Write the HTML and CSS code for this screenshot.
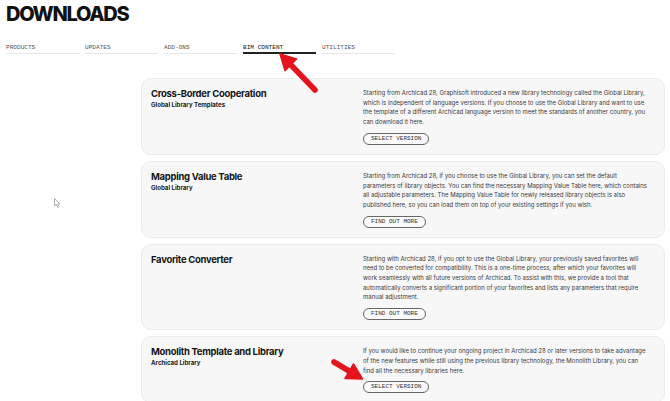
FILE: index.html
```html
<!DOCTYPE html>
<html lang="en">
<head>
<meta charset="utf-8">
<title>Downloads</title>
<link rel="stylesheet" href="styles.css">
</head>
<body>
<div class="page">
  <h1 class="title">DOWNLOADS</h1>
  <nav class="tabs">
    <a class="tab">PRODUCTS</a>
    <a class="tab">UPDATES</a>
    <a class="tab">ADD-ONS</a>
    <a class="tab active">BIM CONTENT</a>
    <a class="tab">UTILITIES</a>
  </nav>
  <main class="cards">
    <section class="card">
      <div class="card-head">
        <h2 class="card-title">Cross-Border Cooperation</h2>
        <p class="card-sub">Global Library Templates</p>
      </div>
      <div class="card-body">
        <p class="card-desc">Starting from Archicad 28, Graphisoft introduced a new library technology called the Global Library,<br>which is independent of language versions. If you choose to use the Global Library and want to use<br>the template of a different Archicad language version to meet the standards of another country, you<br>can download it here.</p>
        <a class="btn">SELECT VERSION</a>
      </div>
    </section>
    <section class="card">
      <div class="card-head">
        <h2 class="card-title">Mapping Value Table</h2>
        <p class="card-sub">Global Library</p>
      </div>
      <div class="card-body">
        <p class="card-desc">Starting from Archicad 28, if you choose to use the Global Library, you can set the default<br>parameters of library objects. You can find the necessary Mapping Value Table here, which contains<br>all adjustable parameters. The Mapping Value Table for newly released library objects is also<br>published here, so you can load them on top of your existing settings if you wish.</p>
        <a class="btn">FIND OUT MORE</a>
      </div>
    </section>
    <section class="card">
      <div class="card-head">
        <h2 class="card-title">Favorite Converter</h2>
      </div>
      <div class="card-body">
        <p class="card-desc">Starting with Archicad 28, if you opt to use the Global Library, your previously saved favorites will<br>need to be converted for compatibility. This is a one-time process, after which your favorites will<br>work seamlessly with all future versions of Archicad. To assist with this, we provide a tool that<br>automatically converts a significant portion of your favorites and lists any parameters that require<br>manual adjustment.</p>
        <a class="btn">FIND OUT MORE</a>
      </div>
    </section>
    <section class="card">
      <div class="card-head">
        <h2 class="card-title">Monolith Template and Library</h2>
        <p class="card-sub">Archicad Library</p>
      </div>
      <div class="card-body">
        <p class="card-desc">If you would like to continue your ongoing project in Archicad 28 or later versions to take advantage<br>of the new features while still using the previous library technology, the Monolith Library, you can<br>find all the necessary libraries here.</p>
        <a class="btn">SELECT VERSION</a>
      </div>
    </section>
  </main>
</div>
<svg class="overlay" width="670" height="401" viewBox="0 0 670 401" aria-hidden="true">
  <line x1="315" y1="90" x2="291" y2="65" stroke="#e3141b" stroke-width="5.6" stroke-linecap="round"/>
  <polygon points="280,54 296.5,59 285,70.6" fill="#e3141b" stroke="#e3141b" stroke-width="1.5" stroke-linejoin="round"/>
  <line x1="334" y1="362" x2="349" y2="371" stroke="#e3141b" stroke-width="5.6" stroke-linecap="round"/>
  <polygon points="362.5,379 345,378.5 353.5,364" fill="#e3141b" stroke="#e3141b" stroke-width="1.5" stroke-linejoin="round"/>
  <path d="M54.5 198.5 L54.5 206 L56.3 204.4 L57.6 207.3 L58.8 206.8 L57.6 204 L60 204 Z" fill="#fff" stroke="#9a9a9a" stroke-width="0.8" stroke-linejoin="round"/>
</svg>
</body>
</html>
```

FILE: styles.css
```css
html, body {
  margin: 0;
  padding: 0;
  background: #ffffff;
}

body {
  font-family: Inter, "Noto Sans", "Liberation Sans", sans-serif;
  color: #1a1a1a;
  width: 670px;
  height: 401px;
  overflow: hidden;
  position: relative;
}

.page {
  padding: 0 5px 0 6px;
}

.title {
  margin: 0;
  padding-top: 2px;
  font-size: 20px;
  line-height: 24px;
  font-weight: 800;
  letter-spacing: -1.3px;
  color: #111;
}

.tabs {
  display: flex;
  gap: 6px;
  margin-top: 17px;
}

.tab {
  width: 73px;
  font-family: "Liberation Mono", "DejaVu Sans Mono", monospace;
  font-size: 6.1px;
  line-height: 9px;
  color: #555;
  padding-bottom: 1px;
  border-bottom: 1px solid #e6e6e6;
}

.tab.active {
  color: #111;
  border-bottom: 2px solid #222;
  padding-bottom: 0;
}

.cards {
  margin: 24px 0 0 135px;
  width: 524px;
  display: flex;
  flex-direction: column;
  gap: 6px;
}

.card {
  display: grid;
  grid-template-columns: 212px 1fr;
  padding: 8px 6px 9px 9px;
  background: #f7f7f7;
  border: 1px solid #ebebeb;
  border-radius: 10px;
}

.card-title {
  margin: 0;
  font-size: 9.5px;
  line-height: 13px;
  font-weight: 700;
  letter-spacing: -0.3px;
  color: #151515;
}

.card-sub {
  margin: 0;
  font-size: 6.1px;
  line-height: 9px;
  font-weight: 700;
  color: #222;
}

.card-body {
  display: flex;
  flex-direction: column;
  align-items: flex-start;
}

.card-desc {
  margin: 1px 0 0;
  font-size: 6px;
  line-height: 9.7px;
  color: #3a3a3a;
}

.btn {
  margin-top: 6px;
  height: 10px;
  line-height: 10px;
  padding: 0 7px;
  border: 1px solid #666;
  border-radius: 7px;
  font-family: "Liberation Mono", "DejaVu Sans Mono", monospace;
  font-size: 6px;
  color: #333;
  background: #fafafa;
}

.overlay {
  position: absolute;
  left: 0;
  top: 0;
  pointer-events: none;
}
```
